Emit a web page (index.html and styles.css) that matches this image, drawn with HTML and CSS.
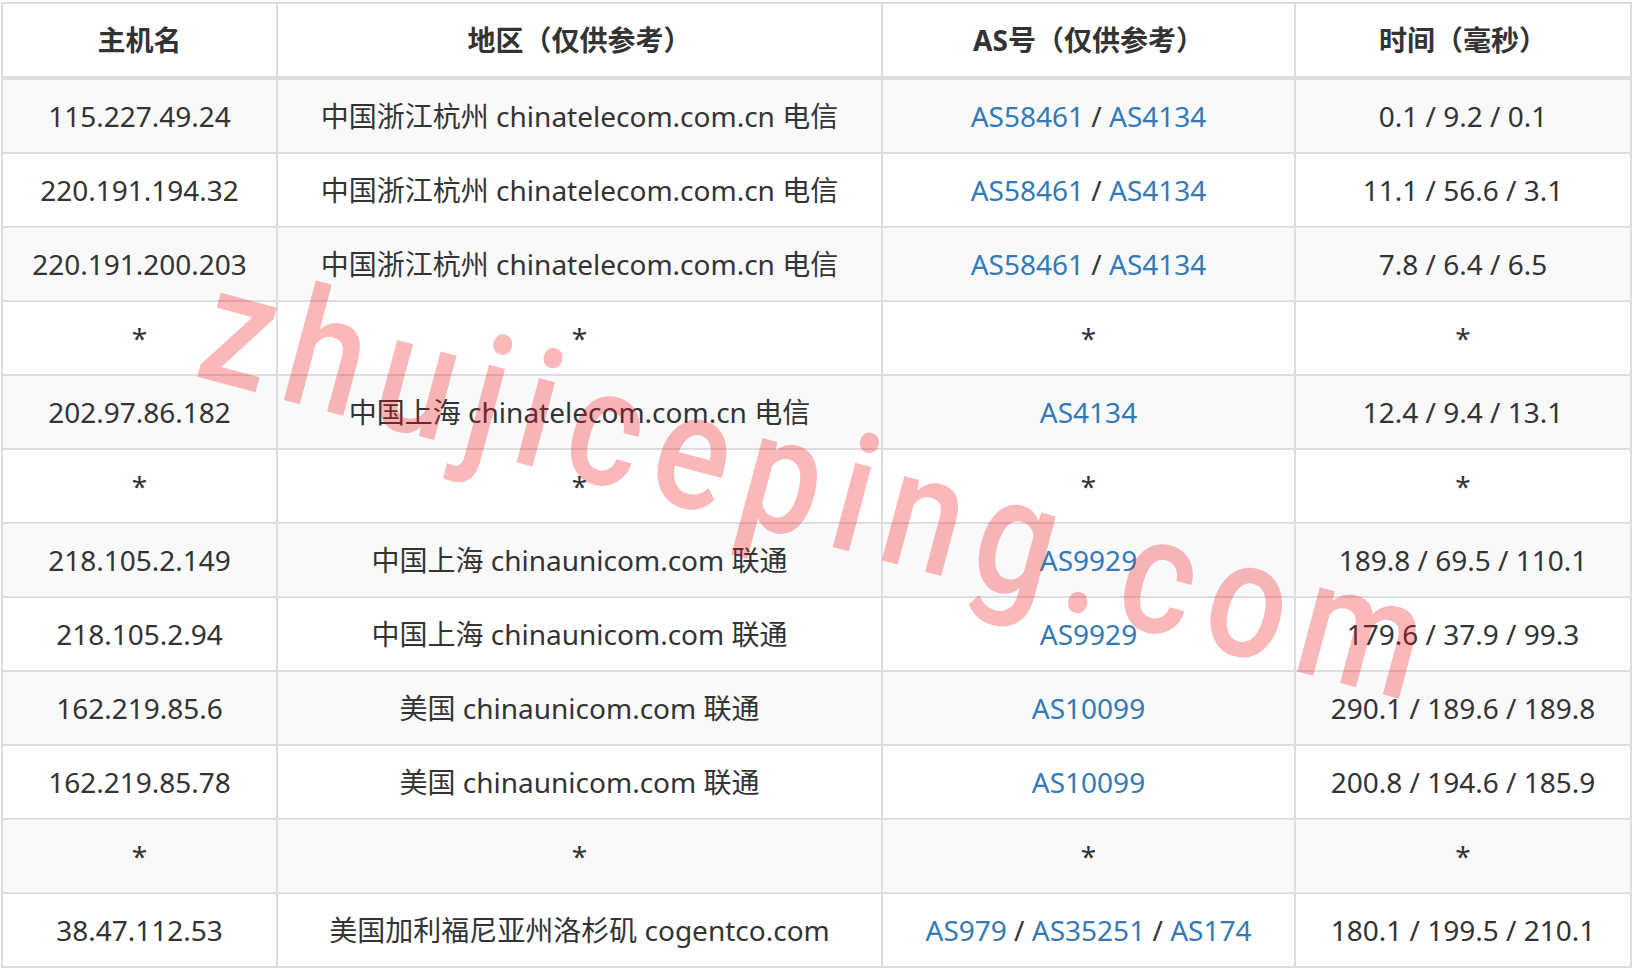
FILE: index.html
```html
<!DOCTYPE html>
<html lang="zh-CN">
<head>
<meta charset="utf-8">
<title>traceroute</title>
<link rel="stylesheet" href="styles.css">
</head>
<body>
<div class="page">
  <table class="trace">
    <colgroup>
      <col class="c-host">
      <col class="c-region">
      <col class="c-as">
      <col class="c-time">
    </colgroup>
    <thead>
      <tr><th>主机名</th><th>地区（仅供参考）</th><th>AS号（仅供参考）</th><th>时间（毫秒）</th></tr>
    </thead>
    <tbody>
      <tr><td>115.227.49.24</td><td>中国浙江杭州 chinatelecom.com.cn 电信</td><td><a href="#">AS58461</a> / <a href="#">AS4134</a></td><td>0.1 / 9.2 / 0.1</td></tr>
      <tr><td>220.191.194.32</td><td>中国浙江杭州 chinatelecom.com.cn 电信</td><td><a href="#">AS58461</a> / <a href="#">AS4134</a></td><td>11.1 / 56.6 / 3.1</td></tr>
      <tr><td>220.191.200.203</td><td>中国浙江杭州 chinatelecom.com.cn 电信</td><td><a href="#">AS58461</a> / <a href="#">AS4134</a></td><td>7.8 / 6.4 / 6.5</td></tr>
      <tr><td>*</td><td>*</td><td>*</td><td>*</td></tr>
      <tr><td>202.97.86.182</td><td>中国上海 chinatelecom.com.cn 电信</td><td><a href="#">AS4134</a></td><td>12.4 / 9.4 / 13.1</td></tr>
      <tr><td>*</td><td>*</td><td>*</td><td>*</td></tr>
      <tr><td>218.105.2.149</td><td>中国上海 chinaunicom.com 联通</td><td><a href="#">AS9929</a></td><td>189.8 / 69.5 / 110.1</td></tr>
      <tr><td>218.105.2.94</td><td>中国上海 chinaunicom.com 联通</td><td><a href="#">AS9929</a></td><td>179.6 / 37.9 / 99.3</td></tr>
      <tr><td>162.219.85.6</td><td>美国 chinaunicom.com 联通</td><td><a href="#">AS10099</a></td><td>290.1 / 189.6 / 189.8</td></tr>
      <tr><td>162.219.85.78</td><td>美国 chinaunicom.com 联通</td><td><a href="#">AS10099</a></td><td>200.8 / 194.6 / 185.9</td></tr>
      <tr><td>*</td><td>*</td><td>*</td><td>*</td></tr>
      <tr><td>38.47.112.53</td><td>美国加利福尼亚州洛杉矶 cogentco.com</td><td><a href="#">AS979</a> / <a href="#">AS35251</a> / <a href="#">AS174</a></td><td>180.1 / 199.5 / 210.1</td></tr>
    </tbody>
  </table>
  <div class="watermark">zhujiceping.com</div>
</div>
</body>
</html>
```

FILE: styles.css
```css
html, body {
  margin: 0;
  padding: 0;
  background: #fff;
}

body {
  font-family: "Noto Sans", "Noto Sans CJK SC", sans-serif;
  font-size: 28px;
  line-height: 40px;
  color: #333;
  overflow: hidden;
}

.page {
  position: relative;
  padding: 2px 0 0 1px;
}

.trace {
  border-collapse: collapse;
  table-layout: fixed;
  width: 1629px;
  border: 2px solid #ddd;
}

.c-host { width: 275px; }
.c-region { width: 605px; }
.c-as { width: 413px; }
.c-time { width: 336px; }

.trace th,
.trace td {
  border: 2px solid #ddd;
  padding: 16px 4px;
  text-align: center;
  vertical-align: middle;
  white-space: nowrap;
  overflow: hidden;
}

.trace th {
  font-weight: bold;
  border-bottom: 4px solid #ddd;
}

.trace tbody tr:nth-child(odd) {
  background: #f9f9f9;
}

.trace a {
  color: #337ab7;
  text-decoration: none;
}

.watermark {
  position: absolute;
  left: 228px;
  top: 241px;
  font-family: Roboto, "Noto Sans", sans-serif;
  font-size: 165px;
  font-weight: 500;
  line-height: 1;
  letter-spacing: 19px;
  color: rgba(240, 20, 30, 0.3);
  transform: rotate(15deg) scaleX(0.85);
  transform-origin: 0 0;
  white-space: nowrap;
  pointer-events: none;
}
```
